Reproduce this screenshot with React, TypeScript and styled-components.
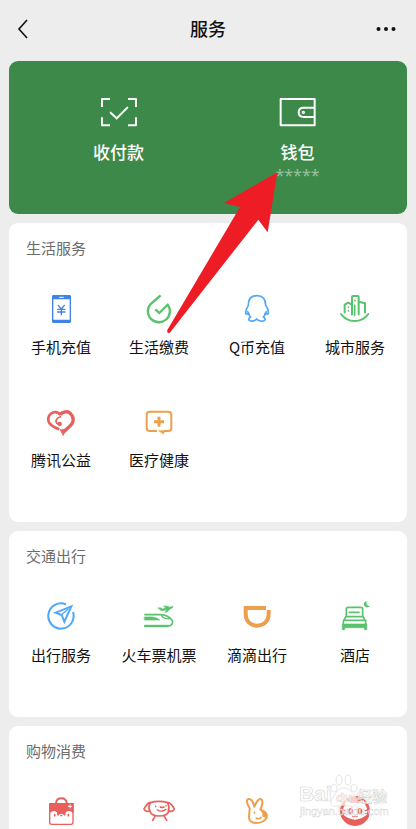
import React from "react";
import styled, { createGlobalStyle } from "styled-components";

const GlobalStyle = createGlobalStyle`
  * { box-sizing: border-box; }
  body { margin: 0; background: #ededed; }
  button { border: 0; padding: 0; background: none; font: inherit; color: inherit; cursor: pointer; }
`;

const RED = "#e7605b";
const GREEN = "#58c26c";
const BLUE = "#50a9f8";
const ORANGE = "#eca04d";

const Page = styled.div`
  position: relative;
  height: 100vh;
  overflow: hidden;
  display: flex;
  flex-direction: column;
  background: #ededed;
  color: #111;
  font-family: "Noto Sans CJK SC", sans-serif;
`;

const Header = styled.header`
  flex: none;
  display: grid;
  grid-template-columns: 48px 1fr 48px;
  align-items: center;
  height: 58px;
  margin-bottom: 3px;
`;

const Title = styled.h1`
  margin: 0;
  padding-bottom: 2px;
  text-align: center;
  font-size: 18px;
  line-height: 24px;
  font-weight: 500;
`;

const NavButton = styled.button<{ $end?: boolean }>`
  display: flex;
  height: 32px;
  align-items: center;
  justify-content: ${(p) => (p.$end ? "flex-end" : "flex-start")};
  padding: ${(p) => (p.$end ? "0 19px 0 0" : "0 0 0 16px")};
`;

const Content = styled.main`
  flex: 1;
  min-height: 0;
  overflow-y: auto;
  scrollbar-width: none;
  display: flex;
  flex-direction: column;
  gap: 9px;
  padding: 0 9px;
`;

const PayCard = styled.section`
  flex: none;
  display: grid;
  grid-template-columns: 1fr 1fr;
  align-items: start;
  height: 153px;
  padding: 35px 20px 0;
  border-radius: 9px;
  background: #3d8949;
  color: #fff;
`;

const PayButton = styled.button`
  display: flex;
  flex-direction: column;
  align-items: center;
  svg { width: 40px; height: 32px; }
`;

const PayLabel = styled.span`
  margin-top: 12px;
  font-size: 17px;
  line-height: 24px;
  font-weight: 500;
`;

const Balance = styled.span`
  font-family: "Noto Sans", sans-serif;
  font-size: 16px;
  line-height: 22px;
  color: #98c19f;
`;

const Card = styled.section`
  flex: none;
  padding-bottom: 23px;
  border-radius: 9px;
  background: #fff;
`;

const CardTitle = styled.h2`
  margin: 0;
  padding-left: 17px;
  font-size: 15px;
  line-height: 50px;
  font-weight: 400;
  color: #6c6c6c;
`;

const Grid = styled.div`
  display: grid;
  grid-template-columns: repeat(4, 1fr);
  padding: 0 3px;
`;

const Tile = styled.button`
  display: flex;
  flex-direction: column;
  align-items: center;
  height: 113px;
  padding-top: 20px;
  white-space: nowrap;
  svg { width: 32px; height: 32px; }
`;

const TileLabel = styled.span`
  margin-top: 11px;
  font-size: 15px;
  line-height: 22px;
`;

const Arrow = styled.svg`
  position: absolute;
  left: calc(50% - 58px);
  top: 160px;
  width: 150px;
  height: 180px;
  pointer-events: none;
`;

const Watermark = styled.svg`
  position: absolute;
  right: 16px;
  bottom: 5px;
  width: 102px;
  height: 54px;
  pointer-events: none;
`;

type IconProps = { box: string; color: string; width?: number; children: React.ReactNode };

const Icon = ({ box, color, width = 6, children }: IconProps) => (
  <svg viewBox={box} fill="none" stroke={color} strokeWidth={width} strokeLinecap="round" strokeLinejoin="round" aria-hidden="true">
    {children}
  </svg>
);

const PhoneIcon = () => (
  <Icon box="75 39 96 96" color="#3f83e6" width={4}>
    <rect x="98" y="47" width="53" height="80" rx="5" />
    <path d="M98 52V50q0-3 3-3h47q3 0 3 3v6H98zM98 121h53v3q0 3-3 3h-47q-3 0-3-3z" fill="#3f83e6" />
    <path d="M119 52h11" stroke="#fff" strokeWidth="3" />
    <path d="M115 76l9 11 9-11M124 87v17M113 88h22M113 96h22" />
  </Icon>
);

const BillIcon = () => (
  <Icon box="369 39 96 96" color={GREEN} width={7}>
    <path d="M422 46L391 73A33 33 0 1 0 443 74L418 99L406 88" strokeLinecap="butt" strokeLinejoin="miter" />
  </Icon>
);

const PenguinIcon = () => (
  <Icon box="63 39 96 96" color={BLUE} width={5}>
    <path d="M111 47C94 47 85 58 85 76C80 84 76 91 77 99C78 104 81 103 86 100C87 105 89 108 92 111C86 114 85 118 88 121C94 125 106 123 110 117C115 124 128 125 134 121C137 117 135 114 130 111C133 108 135 105 136 100C141 103 144 104 145 99C146 91 142 83 137 76C137 58 128 47 111 47Z" />
    <path d="M83 95l4 7M139 95l-4 7" />
  </Icon>
);

const CityIcon = () => (
  <Icon box="357 39 96 96" color={GREEN} width={6}>
    <path d="M363 102Q378 123 404 123T445 102" />
    <path d="M374 100V74L385 68L395 74M396 106V51Q396 48 399 48H413Q416 48 416 51V106M416 65L435 70V100" strokeLinecap="butt" />
    <path d="M385 81v1M385 92v1M405 61v1M404 76V106" strokeWidth="5" />
  </Icon>
);

const HeartIcon = () => (
  <Icon box="75 18 96 96" color={RED} width={7}>
    <path d="M121 45C116 37 108 35 101 37C87 41 82 54 86 65C91 77 102 82 118 88" strokeWidth="8" strokeLinecap="butt" />
    <path d="M120 44C128 35 143 32 151 40C160 49 162 60 156 71C149 82 138 88 129 97" strokeWidth="10" strokeLinecap="butt" />
    <path d="M121 50C109 54 104 64 112 71" strokeWidth="5" />
    <circle cx="119" cy="72" r="4" fill={RED} strokeWidth="5" />
    <path d="M122 89L136 90L130 105Z" fill={RED} strokeWidth="3" />
  </Icon>
);

const MedicalIcon = () => (
  <Icon box="369 18 96 96" color={ORANGE}>
    <path d="M411 93H390Q380 93 380 84V45Q380 35 390 35H444Q454 35 454 45V84Q454 93 444 93H431" strokeLinecap="butt" />
    <path d="M417 50V80M402 65H432" strokeWidth="9" strokeLinecap="butt" />
    <path d="M417 92H436L430 101Z" fill={ORANGE} strokeWidth="2" />
  </Icon>
);

const CompassIcon = () => (
  <Icon box="75 33 96 96" color={BLUE}>
    <path d="M138 43A38 38 0 1 0 159 66" strokeLinecap="butt" />
    <path d="M154 49L107 68L125 75L133 95Z" strokeLinejoin="miter" />
    <path d="M126 73L144 58" strokeWidth="4" />
  </Icon>
);

const TrainIcon = () => (
  <Icon box="369 33 96 96" color={GREEN} width={5}>
    <path d="M373 74H419C434 74 449 81 456 90C461 98 456 108 444 108H373" strokeLinecap="butt" />
    <path d="M374 81H397Q411 83 419 90H374Z" strokeWidth="2" fill={GREEN} />
    <path d="M373 108H446" strokeWidth="7" strokeLinecap="butt" />
    <path d="M425 77Q428 86 450 86" strokeWidth="4" />
    <path d="M415 54L421 53L427 57L438 54L431 49L438 48L450 52Q456 48 459 50Q459 54 450 57L441 66L436 67L440 59L426 62Q420 61 415 54Z" fill={GREEN} strokeWidth="2" />
  </Icon>
);

const RideIcon = () => (
  <Icon box="63 33 96 96" color={ORANGE} width={12}>
    <path d="M138 54H77V72C77 93 91 107 111 107C132 107 146 93 146 72V60" strokeLinecap="butt" strokeLinejoin="miter" />
  </Icon>
);

const HotelIcon = () => (
  <Icon box="357 33 96 96" color={GREEN} width={5}>
    <path d="M379 77V58Q379 52 385 52H422Q428 52 428 58V77L437 94V118M379 77L370 94V118M388 67H417M380 80H428M371 91H437" />
    <path d="M368 102H440V119H434V113H374V119H368Z" fill={GREEN} strokeWidth="2" />
    <path d="M438 34Q428 39 434 48Q440 55 450 49Q438 49 438 34Z" fill={GREEN} strokeWidth="1" />
  </Icon>
);

const BagIcon = () => (
  <Icon box="75 48 96 96" color={RED} width={4}>
    <path d="M108 69C109 59 114 55 124 55S139 59 140 69" strokeWidth="6" />
    <path d="M89 71H159V127Q159 133 153 133H95Q89 133 89 127Z" />
    <path d="M89 71H159V97Q155 91 147 91C138 91 134 97 134 105Q124 97 114 105C114 97 110 91 102 91Q93 91 89 97Z" fill={RED} />
    <path d="M150 75V84M145 79H155" stroke="#fff" strokeWidth="3" />
    <path d="M104 104V107M145 104V107" strokeWidth="5" />
    <ellipse cx="124" cy="107" rx="7" ry="5" fill="#fff" stroke="none" />
    <ellipse cx="124" cy="107" rx="4" ry="2" fill={RED} stroke="none" />
  </Icon>
);

const DogIcon = () => (
  <Icon box="369 48 96 96" color={RED} width={5}>
    <path d="M391 68Q417 60 443 68C451 67 457 76 463 87C461 93 453 96 447 93C443 104 434 108 418 108S393 104 389 92C384 96 375 94 372 87C377 79 382 67 391 68" />
    <path d="M391 68Q384 80 389 92M443 68Q449 80 445 94M405 109L398 121M433 109L440 121" />
    <path d="M412 89Q423 98 438 88" strokeWidth="4" />
    <path d="M407 78v2M438 76v2" strokeWidth="4" />
    <path d="M421 81Q426 84 432 81" strokeWidth="5" />
  </Icon>
);

const RabbitIcon = () => (
  <Icon box="63 78 96 96" color={ORANGE}>
    <path d="M89 115C80 100 77 88 86 87C96 86 100 98 103 110C108 98 116 84 124 88C130 92 127 107 121 119C131 122 140 128 141 138C140 150 126 159 109 159C96 159 87 153 87 142Z" />
    <path d="M103 126v3M109 145Q120 148 123 142" strokeWidth="5" />
    <path d="M125 125Q132 131 128 139L136 142L141 135L133 125Z" fill={ORANGE} strokeWidth="3" />
  </Icon>
);

const CatIcon = () => (
  <Icon box="357 78 96 96" color={RED} width={4}>
    <circle cx="405" cy="123" r="43" fill={RED} />
    <path d="M376 108L380 93L393 101H417L430 93L435 108Q445 122 435 136Q405 158 375 136Q365 122 376 108Z" fill="#fff" stroke="#fff" />
    <ellipse cx="391" cy="124" rx="8" ry="9" fill={RED} stroke="none" />
    <ellipse cx="419" cy="124" rx="8" ry="9" fill={RED} stroke="none" />
    <path d="M392 121v5M418 121v5" stroke="#fff" strokeWidth="3" />
    <path d="M366 119L374 122M366 132L374 130M444 119L436 122M444 132L436 130" />
    <path d="M397 139Q401 143 405 138Q409 143 413 139" strokeWidth="3" />
  </Icon>
);

type Service = { name: string; icon: React.ReactNode; label?: boolean };
type Group = { title: string; items: Service[] };

const groups: Group[] = [
  {
    title: "生活服务",
    items: [
      { name: "手机充值", icon: <PhoneIcon />, label: true },
      { name: "生活缴费", icon: <BillIcon />, label: true },
      { name: "Q币充值", icon: <PenguinIcon />, label: true },
      { name: "城市服务", icon: <CityIcon />, label: true },
      { name: "腾讯公益", icon: <HeartIcon />, label: true },
      { name: "医疗健康", icon: <MedicalIcon />, label: true },
    ],
  },
  {
    title: "交通出行",
    items: [
      { name: "出行服务", icon: <CompassIcon />, label: true },
      { name: "火车票机票", icon: <TrainIcon />, label: true },
      { name: "滴滴出行", icon: <RideIcon />, label: true },
      { name: "酒店", icon: <HotelIcon />, label: true },
    ],
  },
  {
    title: "购物消费",
    items: [
      { name: "品牌", icon: <BagIcon /> },
      { name: "京东", icon: <DogIcon /> },
      { name: "转转", icon: <RabbitIcon /> },
      { name: "特卖", icon: <CatIcon /> },
    ],
  },
];

export default function App() {
  return (
    <Page>
      <GlobalStyle />
      <Header>
        <NavButton aria-label="返回">
          <svg width="14" height="20" viewBox="0 0 14 20" fill="none" stroke="#111" strokeWidth="1.6">
            <path d="M11 1L3 10L11 19" />
          </svg>
        </NavButton>
        <Title>服务</Title>
        <NavButton $end aria-label="更多">
          <svg width="22" height="6" viewBox="0 0 22 6" fill="#111">
            <circle cx="3.5" cy="3" r="2" />
            <circle cx="11" cy="3" r="2" />
            <circle cx="18.5" cy="3" r="2" />
          </svg>
        </NavButton>
      </Header>
      <Content>
        <PayCard>
          <PayButton>
            <Icon box="27 33 120 96" color="#fff">
              <path d="M36 66V42H60M114 42H138V66M138 97V121H114M60 121H36V97" strokeLinecap="butt" />
              <path d="M62 83L80 100L112 68" strokeLinejoin="miter" />
            </Icon>
            <PayLabel>收付款</PayLabel>
          </PayButton>
          <PayButton>
            <Icon box="562 33 120 96" color="#fff">
              <path d="M570 42H672V121H570ZM672 68H639Q624 68 624 82T639 96H672" />
              <circle cx="638" cy="82" r="2" />
            </Icon>
            <PayLabel>钱包</PayLabel>
            <Balance>*****</Balance>
          </PayButton>
        </PayCard>
        {groups.map((group) => (
          <Card key={group.title}>
            <CardTitle>{group.title}</CardTitle>
            <Grid>
              {group.items.map((item) => (
                <Tile key={item.name} aria-label={item.name}>
                  {item.icon}
                  {item.label && <TileLabel>{item.name}</TileLabel>}
                </Tile>
              ))}
            </Grid>
          </Card>
        ))}
      </Content>
      <Arrow viewBox="0 0 450 540" aria-hidden="true">
        <path d="M382 37L222 129L270 141L52 510Q50 518 56 519Q60 520 63 514L325 179L353 217Z" fill="#ee1d25" />
      </Arrow>
      <Watermark viewBox="-2 0 102 54" fill="#fff" fillOpacity="0.7" stroke="#d4d4d4" strokeWidth="0.6">
        <ellipse cx="34" cy="18" rx="3" ry="4" />
        <ellipse cx="39" cy="10" rx="3" ry="5" />
        <ellipse cx="48" cy="10" rx="3" ry="5" />
        <ellipse cx="54" cy="18" rx="3" ry="4" />
        <path d="M44 18C50 18 52 23 56 27C60 33 56 38 50 36Q44 35 38 36C31 38 29 33 33 27C36 23 38 18 44 18Z" />
        <text x="-1" y="31" fontFamily="Liberation Sans, sans-serif" fontSize="21" fontWeight="700">Bai</text>
        <text x="36" y="32" fontFamily="Liberation Sans, sans-serif" fontSize="13" fontWeight="700">du</text>
        <text x="57" y="32" fontFamily="Noto Sans CJK SC, sans-serif" fontSize="15" fontWeight="700">经验</text>
        <text x="0" y="45" fontFamily="Liberation Sans, sans-serif" fontSize="11" strokeWidth="0.4">jingyan.baidu.com</text>
      </Watermark>
    </Page>
  );
}
